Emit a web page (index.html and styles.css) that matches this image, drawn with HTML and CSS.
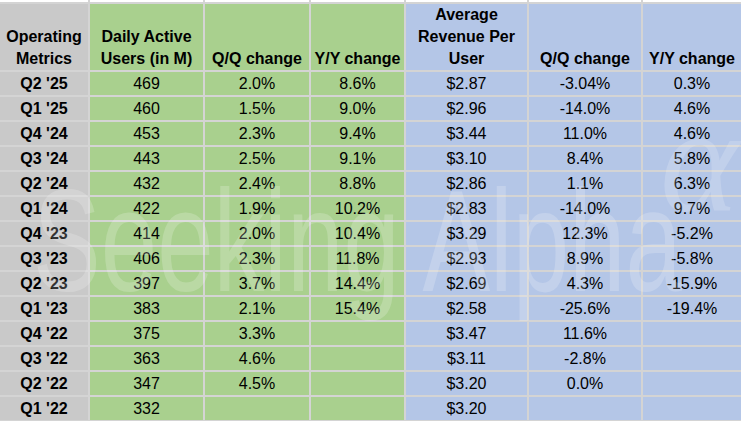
FILE: index.html
```html
<!DOCTYPE html>
<html lang="en">
<head>
<meta charset="utf-8">
<title>Operating Metrics</title>
<link rel="stylesheet" href="styles.css">
</head>
<body>
<div class="frame">
  <div class="sheet">
    <div class="top"></div><div class="top"></div><div class="top"></div><div class="top"></div><div class="top"></div><div class="top"></div><div class="top"></div>

    <div class="cell hdr gray"><span>Operating<br>Metrics</span></div>
    <div class="cell hdr green"><span>Daily Active<br>Users (in M)</span></div>
    <div class="cell hdr green"><span>Q/Q change</span></div>
    <div class="cell hdr green"><span>Y/Y change</span></div>
    <div class="cell hdr blue"><span>Average<br>Revenue Per<br>User</span></div>
    <div class="cell hdr blue"><span>Q/Q change</span></div>
    <div class="cell hdr blue"><span>Y/Y change</span></div>

    <div class="cell lbl gray">Q2 '25</div><div class="cell green">469</div><div class="cell green">2.0%</div><div class="cell green">8.6%</div><div class="cell blue">$2.87</div><div class="cell blue">-3.04%</div><div class="cell blue">0.3%</div>
    <div class="cell lbl gray">Q1 '25</div><div class="cell green">460</div><div class="cell green">1.5%</div><div class="cell green">9.0%</div><div class="cell blue">$2.96</div><div class="cell blue">-14.0%</div><div class="cell blue">4.6%</div>
    <div class="cell lbl gray">Q4 '24</div><div class="cell green">453</div><div class="cell green">2.3%</div><div class="cell green">9.4%</div><div class="cell blue">$3.44</div><div class="cell blue">11.0%</div><div class="cell blue">4.6%</div>
    <div class="cell lbl gray">Q3 '24</div><div class="cell green">443</div><div class="cell green">2.5%</div><div class="cell green">9.1%</div><div class="cell blue">$3.10</div><div class="cell blue">8.4%</div><div class="cell blue">5.8%</div>
    <div class="cell lbl gray">Q2 '24</div><div class="cell green">432</div><div class="cell green">2.4%</div><div class="cell green">8.8%</div><div class="cell blue">$2.86</div><div class="cell blue">1.1%</div><div class="cell blue">6.3%</div>
    <div class="cell lbl gray">Q1 '24</div><div class="cell green">422</div><div class="cell green">1.9%</div><div class="cell green">10.2%</div><div class="cell blue">$2.83</div><div class="cell blue">-14.0%</div><div class="cell blue">9.7%</div>
    <div class="cell lbl gray">Q4 '23</div><div class="cell green">414</div><div class="cell green">2.0%</div><div class="cell green">10.4%</div><div class="cell blue">$3.29</div><div class="cell blue">12.3%</div><div class="cell blue">-5.2%</div>
    <div class="cell lbl gray">Q3 '23</div><div class="cell green">406</div><div class="cell green">2.3%</div><div class="cell green">11.8%</div><div class="cell blue">$2.93</div><div class="cell blue">8.9%</div><div class="cell blue">-5.8%</div>
    <div class="cell lbl gray">Q2 '23</div><div class="cell green">397</div><div class="cell green">3.7%</div><div class="cell green">14.4%</div><div class="cell blue">$2.69</div><div class="cell blue">4.3%</div><div class="cell blue">-15.9%</div>
    <div class="cell lbl gray">Q1 '23</div><div class="cell green">383</div><div class="cell green">2.1%</div><div class="cell green">15.4%</div><div class="cell blue">$2.58</div><div class="cell blue">-25.6%</div><div class="cell blue">-19.4%</div>
    <div class="cell lbl gray">Q4 '22</div><div class="cell green">375</div><div class="cell green">3.3%</div><div class="cell green"></div><div class="cell blue">$3.47</div><div class="cell blue">11.6%</div><div class="cell blue"></div>
    <div class="cell lbl gray">Q3 '22</div><div class="cell green">363</div><div class="cell green">4.6%</div><div class="cell green"></div><div class="cell blue">$3.11</div><div class="cell blue">-2.8%</div><div class="cell blue"></div>
    <div class="cell lbl gray">Q2 '22</div><div class="cell green">347</div><div class="cell green">4.5%</div><div class="cell green"></div><div class="cell blue">$3.20</div><div class="cell blue">0.0%</div><div class="cell blue"></div>
    <div class="cell lbl gray">Q1 '22</div><div class="cell green">332</div><div class="cell green"></div><div class="cell green"></div><div class="cell blue">$3.20</div><div class="cell blue"></div><div class="cell blue"></div>
  </div>
  <div class="watermark" aria-hidden="true">Seeking Alpha</div>
  <div class="wm-logo" aria-hidden="true">α</div>
</div>
</body>
</html>
```

FILE: styles.css
```css
html, body {
  margin: 0;
  padding: 0;
  background: #ffffff;
}

body {
  width: 741px;
  height: 421px;
  overflow: hidden;
  font-family: "Liberation Sans", Arial, sans-serif;
  font-size: 16px;
  color: #000000;
}

.frame {
  position: relative;
  width: 741px;
  height: 421px;
  overflow: hidden;
}

.sheet {
  display: grid;
  grid-template-columns: 88px 113px 104px 93px 121px 112px 98px;
  grid-template-rows: 2px 66px repeat(14, 23px);
  gap: 2px;
  padding-bottom: 1px;
  background: #d4d4d4;
}

.top {
  background: #ffffff;
}

.cell {
  display: flex;
  align-items: center;
  justify-content: center;
  text-align: center;
  line-height: 23px;
  white-space: nowrap;
}

.hdr {
  align-items: flex-end;
  font-weight: bold;
  line-height: 22px;
}

.lbl {
  font-weight: bold;
}

.gray {
  background: #c9c9c9;
}

.green {
  background: #a9d08e;
}

.blue {
  background: #b4c6e7;
}

.watermark {
  position: absolute;
  left: 33px;
  top: 169px;
  font-family: "Liberation Sans", Arial, sans-serif;
  font-size: 145px;
  line-height: 1;
  font-weight: normal;
  color: rgba(255, 255, 255, 0.2);
  white-space: nowrap;
  transform: scaleX(0.7);
  transform-origin: left top;
  pointer-events: none;
}

.wm-logo {
  position: absolute;
  left: 660px;
  top: 85px;
  font-family: "Liberation Serif", serif;
  font-style: italic;
  font-size: 150px;
  line-height: 1;
  color: rgba(255, 255, 255, 0.18);
  pointer-events: none;
}
```
